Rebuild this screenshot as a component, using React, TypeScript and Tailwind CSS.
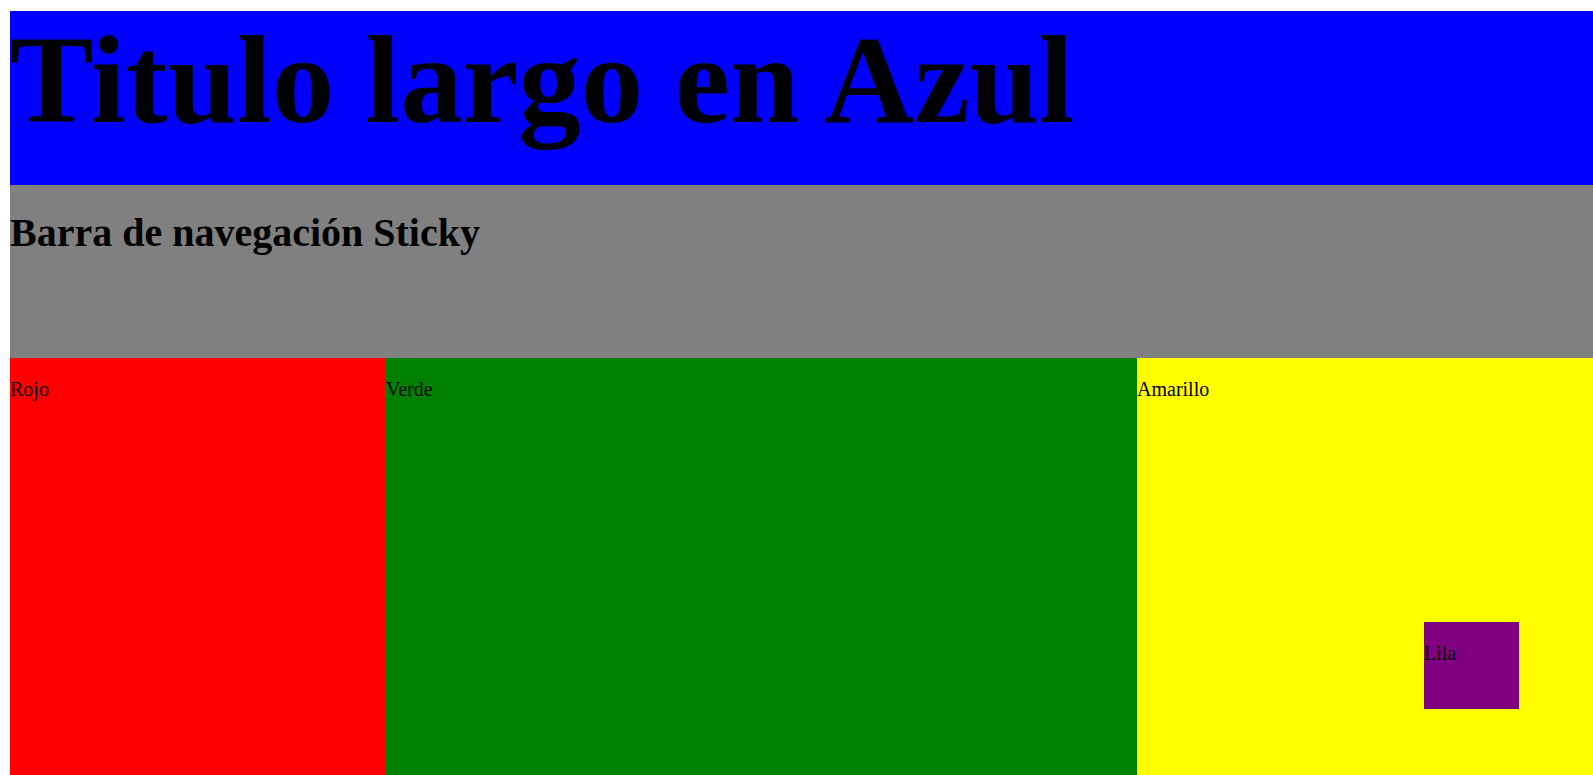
export default function App() {
  return (
    <div className="min-h-screen bg-white pt-[11px] pl-[10px] text-black font-['Liberation_Serif',serif] overflow-hidden">
      <header className="h-[174px] bg-[#0000ff]">
        <h1 className="m-0 pt-[7px] text-[125px] font-bold leading-none whitespace-nowrap">Titulo largo en Azul</h1>
      </header>
      <nav className="h-[173px] bg-[#808080]">
        <h2 className="m-0 pt-[25px] text-[40px] font-bold leading-[1.149] whitespace-nowrap">Barra de navegación Sticky</h2>
      </nav>
      <main className="flex h-[420px]">
        <section className="w-[376px] shrink-0 bg-[#ff0000]">
          <p className="my-5 text-[20px] leading-[23px]">Rojo</p>
        </section>
        <section className="w-[751px] shrink-0 bg-[#008000]">
          <p className="my-5 text-[20px] leading-[23px]">Verde</p>
        </section>
        <section className="flex flex-1 flex-col bg-[#ffff00]">
          <p className="my-5 text-[20px] leading-[23px]">Amarillo</p>
          <div className="ml-[287px] mt-[201px] h-[87px] w-[95px] bg-[#800080]">
            <p className="my-5 text-[20px] leading-[23px]">Lila</p>
          </div>
        </section>
      </main>
    </div>
  );
}
